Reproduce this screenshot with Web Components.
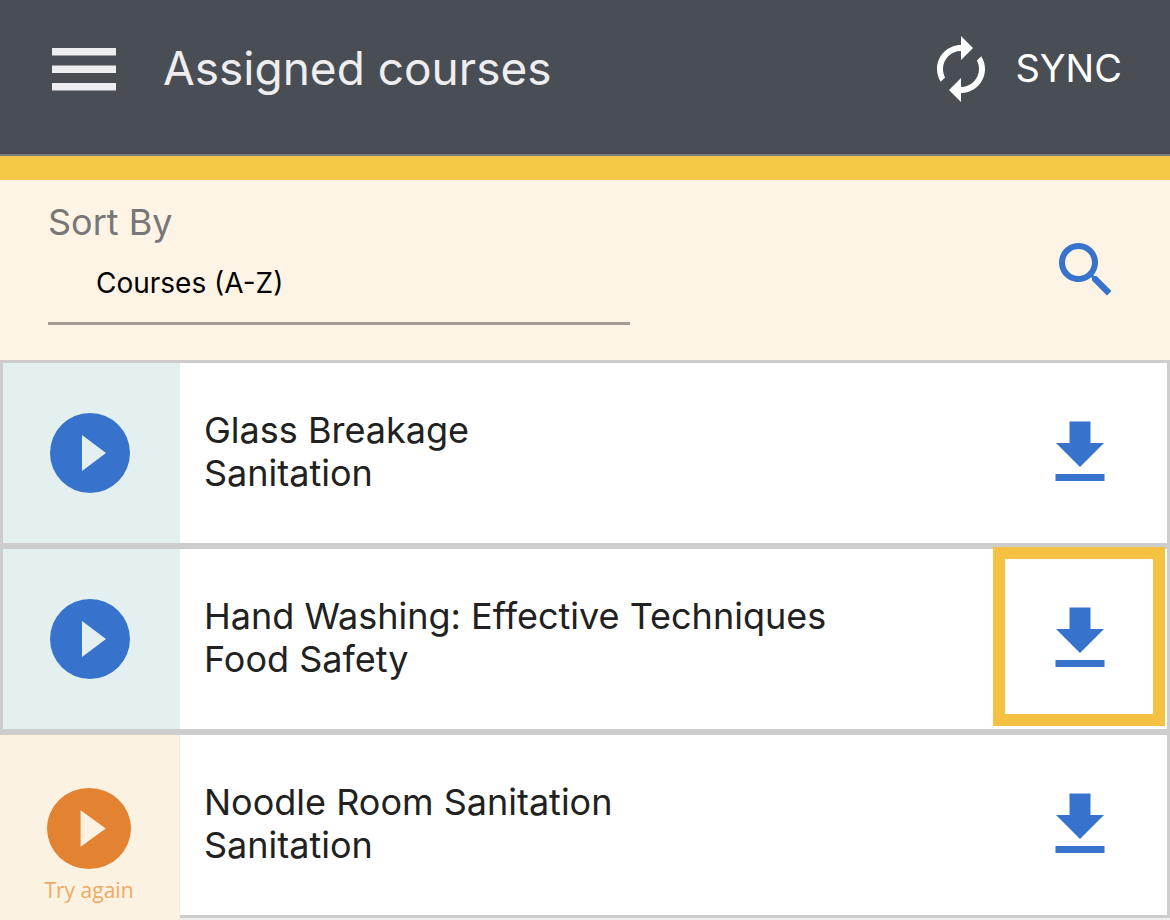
<!DOCTYPE html>
<html lang="en">
<head>
<meta charset="utf-8">
<meta name="viewport" content="width=device-width, initial-scale=1">
<title>Assigned courses</title>
<style>
  body {
    margin: 0;
    min-height: 100vh;
    background: #efefef;
    font-family: Inter, "Liberation Sans", sans-serif;
    color: #212121;
  }
</style>
</head>
<body>
<app-header heading="Assigned courses"></app-header>
<sort-bar></sort-bar>
<course-list>
  <course-row><span slot="name">Glass Breakage</span><span slot="topic">Sanitation</span></course-row>
  <course-row highlighted><span slot="name">Hand Washing: Effective Techniques</span><span slot="topic">Food Safety</span></course-row>
  <course-row retry><span slot="name">Noodle Room Sanitation</span><span slot="topic">Sanitation</span></course-row>
</course-list>

<script>
const define = (name, markup, setup) => {
  const template = document.createElement('template');
  template.innerHTML = markup;
  customElements.define(name, class extends HTMLElement {
    constructor() {
      super();
      this.attachShadow({ mode: 'open' }).append(template.content.cloneNode(true));
    }
    connectedCallback() {
      if (setup) setup(this, this.shadowRoot);
    }
  });
};

const reset = `
  *, ::after, :host { box-sizing: border-box; }
  button { margin: 0; padding: 0; border: 0; background: none; color: inherit; font: inherit; cursor: pointer; }
  svg { display: block; fill: currentColor; }
`;

define('app-header', `
  <style>
    ${reset}
    :host { display: block; background: #494d54; color: #eeeef0; border-bottom: 24px solid #f5c945; }
    header { display: flex; align-items: center; height: 156px; padding: 0 48px 16px 52px; border-bottom: 2px solid #777a7e; }
    h1 { flex: 1; margin: 0 0 0 47px; padding-bottom: 2px; font-size: 46px; line-height: 56px; font-weight: 400; }
    .sync { display: flex; align-items: center; gap: 18px; color: #fff; font-size: 38px; line-height: 48px; }
    .sync span { padding-bottom: 2px; }
  </style>
  <header>
    <button aria-label="Menu">
      <svg width="64" height="44" viewBox="0 0 64 44"><path d="M0 1h64v7.500H0zM0 18.500h64v7.500H0zM0 36h64v7.500H0z"/></svg>
    </button>
    <h1></h1>
    <button class="sync">
      <svg width="72" height="72" viewBox="0 0 24 24" aria-hidden="true"><path d="M12 6v3l4-4-4-4v3c-4.420 0-8 3.580-8 8 0 1.570.46 3.030 1.240 4.260L6.700 14.800c-.45-.83-.7-1.790-.7-2.800 0-3.310 2.690-6 6-6zm6.760 1.740L17.300 9.200c.44.84.7 1.790.7 2.800 0 3.310-2.690 6-6 6v-3l-4 4 4 4v-3c4.420 0 8-3.580 8-8 0-1.570-.46-3.030-1.240-4.260z"/></svg>
      <span>SYNC</span>
    </button>
  </header>
`, (host, root) => {
  root.querySelector('h1').textContent = host.getAttribute('heading');
});

define('sort-bar', `
  <style>
    ${reset}
    :host { display: flex; justify-content: space-between; height: 180px; padding: 20px 48px 0; background: #fdf4e6; }
    .field { display: flex; flex-direction: column; flex: 0 1 582px; }
    label { color: #777; font-size: 36px; line-height: 44px; }
    select {
      appearance: none; width: 100%; height: 81px; margin: 0; padding: 0 0 0 48px;
      border: 0; border-bottom: 3px solid #a39b93; border-radius: 0; background: none;
      color: #000; font: 28px/32px Inter, "Liberation Sans", sans-serif;
    }
    .search { align-self: flex-start; margin-top: 34px; color: #3773cc; }
  </style>
  <div class="field">
    <label for="sort">Sort By</label>
    <select id="sort"><option>Courses (A-Z)</option></select>
  </div>
  <button class="search" aria-label="Search">
    <svg width="72" height="72" viewBox="0 0 24 24"><path d="M15.500 14h-.79l-.28-.27C15.410 12.590 16 11.110 16 9.500 16 5.910 13.090 3 9.500 3S3 5.910 3 9.500 5.910 16 9.500 16c1.610 0 3.090-.59 4.230-1.570l.27.28v.79l5 4.990L20.490 19l-4.990-5zm-6 0C7.010 14 5 11.990 5 9.500S7.010 5 9.500 5 14 7.010 14 9.500 11.990 14 9.500 14z"/></svg>
  </button>
`);

define('course-list', `
  <style>:host { display: flex; flex-direction: column; }</style>
  <slot></slot>
`);

define('course-row', `
  <style>
    ${reset}
    :host { position: relative; display: flex; min-height: 186px; border: 3px solid #cdcdcd; background: #fff; }
    .play {
      display: flex; flex-direction: column; align-items: center; justify-content: center;
      flex: none; width: 177px; padding-right: 3px; background: #e3f0ef; color: #3773cc;
    }
    .again { display: none; }
    .text { flex: 1; display: flex; flex-direction: column; justify-content: center; padding: 0 24px 2px; font-size: 36px; line-height: 43px; }
    .download { flex: none; width: 172px; padding: 0 2px 4px 0; color: #3773cc; display: flex; align-items: center; justify-content: center; }
    :host([highlighted])::after {
      content: ""; position: absolute; top: -2px; right: 2px; bottom: 3px; width: 172px; box-sizing: border-box;
      border: 12px solid #f5c143; pointer-events: none;
    }
    :host([retry]) .play {
      justify-content: flex-start; width: 180px; margin: 0 0 -5px -3px; padding: 53px 1px 0 0;
      border-right: 1px solid #ececec; background: #fcf2e1; color: #e38231;
    }
    :host([retry]) .disc { width: 84px; height: 81px; }
    :host([retry]) .again { display: block; margin-top: 6px; color: #eea962; font: 21px/30px "Open Sans", "Noto Sans", sans-serif; }
  </style>
  <button class="play" aria-label="Play course">
    <svg class="disc" width="80" height="80" viewBox="0 0 80 80" preserveAspectRatio="none"><path fill-rule="evenodd" d="M40 0a40 40 0 1 1 0 80a40 40 0 1 1 0-80zM32 22v36l24-18z"/></svg>
    <span class="again">Try again</span>
  </button>
  <div class="text"><slot name="name"></slot><slot name="topic"></slot></div>
  <button class="download" aria-label="Download course">
    <svg width="50" height="60" viewBox="0 0 50 60"><path d="M14.500.5h21V22H49L25 46 1 22h13.500zM.5 53h49v7H.5z"/></svg>
  </button>
`);
</script>
</body>
</html>
